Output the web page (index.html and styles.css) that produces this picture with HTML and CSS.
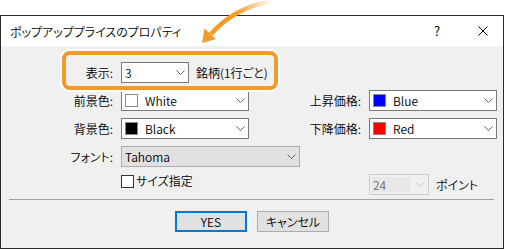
FILE: index.html
```html
<!DOCTYPE html>
<html lang="ja">
<head>
<meta charset="utf-8">
<title>ポップアッププライスのプロパティ</title>
<link rel="stylesheet" href="styles.css">
</head>
<body>
<div class="window">
  <div class="titlebar">
    <span class="title">ポップアッププライスのプロパティ</span>
    <span class="help">?</span>
    <svg class="close" width="10" height="10" viewBox="0 0 10 10"><path d="M0.5 0.5 L9.5 9.5 M9.5 0.5 L0.5 9.5" stroke="#000" stroke-width="1" fill="none"/></svg>
  </div>
  <div class="content">
    <div class="form">
      <span class="label">表示:</span>
      <div class="cell wide">
        <div class="combo combo-count"><span class="val">3</span><svg class="chev" width="9" height="5" viewBox="0 0 9 5"><path d="M0.5 0.5 L4.5 4.5 L8.5 0.5" stroke="#606060" fill="none"/></svg></div>
        <span class="after">銘柄(1行ごと)</span>
      </div>
      <span class="empty"></span>

      <span class="label">前景色:</span>
      <div class="combo"><span class="swatch sw-white"></span><span class="val">White</span><svg class="chev" width="9" height="5" viewBox="0 0 9 5"><path d="M0.5 0.5 L4.5 4.5 L8.5 0.5" stroke="#606060" fill="none"/></svg></div>
      <span class="label">上昇価格:</span>
      <div class="combo"><span class="swatch sw-blue"></span><span class="val">Blue</span><svg class="chev" width="9" height="5" viewBox="0 0 9 5"><path d="M0.5 0.5 L4.5 4.5 L8.5 0.5" stroke="#606060" fill="none"/></svg></div>

      <span class="label">背景色:</span>
      <div class="combo"><span class="swatch sw-black"></span><span class="val">Black</span><svg class="chev" width="9" height="5" viewBox="0 0 9 5"><path d="M0.5 0.5 L4.5 4.5 L8.5 0.5" stroke="#606060" fill="none"/></svg></div>
      <span class="label">下降価格:</span>
      <div class="combo"><span class="swatch sw-red"></span><span class="val">Red</span><svg class="chev" width="9" height="5" viewBox="0 0 9 5"><path d="M0.5 0.5 L4.5 4.5 L8.5 0.5" stroke="#606060" fill="none"/></svg></div>

      <span class="label">フォント:</span>
      <div class="cell wide">
        <div class="combo combo-font"><span class="val">Tahoma</span><svg class="chev" width="9" height="5" viewBox="0 0 9 5"><path d="M0.5 0.5 L4.5 4.5 L8.5 0.5" stroke="#606060" fill="none"/></svg></div>
      </div>
      <span class="empty"></span>

      <span class="empty"></span>
      <div class="cell wide top">
        <span class="check"></span><span class="check-text">サイズ指定</span>
      </div>
      <div class="cell">
        <div class="combo combo-size"><span class="val"><span class="size-field">24</span></span><svg class="chev" width="9" height="5" viewBox="0 0 9 5"><path d="M0.5 0.5 L4.5 4.5 L8.5 0.5" stroke="#c4c4c4" fill="none"/></svg></div>
        <span class="after">ポイント</span>
      </div>
    </div>
    <div class="sep"></div>
    <div class="buttons">
      <div class="btn primary">YES</div>
      <div class="btn">キャンセル</div>
    </div>
  </div>
</div>
<div class="highlight"></div>
<svg class="arrow" width="505" height="60" viewBox="0 0 505 60">
  <defs>
    <linearGradient id="fade" gradientUnits="userSpaceOnUse" x1="272" y1="1" x2="212" y2="34">
      <stop offset="0" stop-color="#f39a28" stop-opacity="0"/>
      <stop offset="0.55" stop-color="#f39a28" stop-opacity="1"/>
      <stop offset="1" stop-color="#f39a28" stop-opacity="1"/>
    </linearGradient>
  </defs>
  <path d="M272 1 C249 5 227 16 211 34" stroke="url(#fade)" stroke-width="4.5" fill="none"/>
  <polygon points="202,43 204.5,28.5 216,39" fill="#f39a28"/>
</svg>
</body>
</html>
```

FILE: styles.css
```css
html, body {
  margin: 0;
  padding: 0;
  background: #fff;
}
body {
  position: relative;
  width: 505px;
  height: 250px;
  overflow: hidden;
  font-family: "Noto Sans CJK JP DemiLight", "Noto Sans CJK JP", "Noto Sans", sans-serif;
  font-size: 12px;
  font-weight: 350;
  font-feature-settings: "palt";
  color: #000;
}
.window {
  margin-top: 15px;
  width: 504px;
  height: 234px;
  box-sizing: border-box;
  border: 1px solid #2b2b2b;
  display: flex;
  flex-direction: column;
}
.titlebar {
  height: 30px;
  flex: none;
  background: #fff;
  display: flex;
  align-items: center;
  padding: 0 15px 0 9px;
}
.title {
  flex: 1;
  line-height: 14px;
  padding-top: 1px;
}
.help {
  width: 7px;
  margin-right: 37px;
  font-size: 13px;
  line-height: 14px;
}
.close {
  display: block;
}
.content {
  flex: 1;
  background: #f0f0f0;
  padding-top: 16px;
}
.form {
  display: grid;
  grid-template-columns: 112px 128px 104px 128px;
  grid-auto-rows: 21px;
  column-gap: 8px;
  row-gap: 7px;
}
.label {
  justify-self: end;
  align-self: center;
  line-height: 14px;
  white-space: nowrap;
}
.cell {
  display: flex;
  align-items: center;
  white-space: nowrap;
}
.cell.wide {
  grid-column: span 2;
}
.cell.top {
  align-items: flex-start;
}
.combo {
  display: flex;
  align-items: center;
  height: 21px;
  box-sizing: border-box;
  border: 1px solid #7a7a7a;
  background: #fff;
  padding-left: 3px;
}
.val {
  flex: 1;
  line-height: 14px;
  white-space: nowrap;
}
.chev {
  display: block;
  margin-right: 3px;
  flex: none;
}
.combo-count {
  width: 68px;
}
.after {
  margin-left: 7px;
  line-height: 14px;
}
.combo-font {
  width: 179px;
  background: #e1e1e1;
  border-color: #adadad;
}
.combo-size {
  width: 60px;
  background: #f0f0f0;
  border-color: #cccccc;
  padding-left: 2px;
}
.size-field {
  display: block;
  width: 37px;
  height: 15px;
  line-height: 15px;
  background: #e8e8e8;
  color: #6d6d6d;
  padding-left: 1px;
}
.swatch {
  width: 13px;
  height: 13px;
  box-sizing: border-box;
  border: 1px solid #8a8a8a;
  margin-right: 7px;
  flex: none;
}
.sw-white { background: #fff; }
.sw-black { background: #000; }
.sw-blue { background: #0000ff; }
.sw-red { background: #ff0000; }
.check {
  width: 13px;
  height: 13px;
  box-sizing: border-box;
  border: 1px solid #333;
  background: #fff;
  margin-top: 1px;
  flex: none;
}
.check-text {
  margin-left: 2px;
  line-height: 14px;
}
.sep {
  margin: 4px 0 0 8px;
  width: 485px;
  height: 1px;
  background: #a0a0a0;
}
.buttons {
  margin-top: 11px;
  display: flex;
  justify-content: center;
  gap: 10px;
}
.btn {
  width: 72px;
  height: 21px;
  box-sizing: border-box;
  background: #e1e1e1;
  border: 1px solid #adadad;
  display: flex;
  align-items: center;
  justify-content: center;
  line-height: 14px;
}
.btn.primary {
  border: 2px solid #0078d7;
}
.highlight {
  position: absolute;
  left: 62px;
  top: 51px;
  width: 216px;
  height: 39px;
  box-sizing: border-box;
  border: 4px solid #f39a28;
  border-radius: 8px;
  box-shadow: 0 0 0 2px #fff;
}
.arrow {
  position: absolute;
  left: 0;
  top: 0;
  pointer-events: none;
}
```
